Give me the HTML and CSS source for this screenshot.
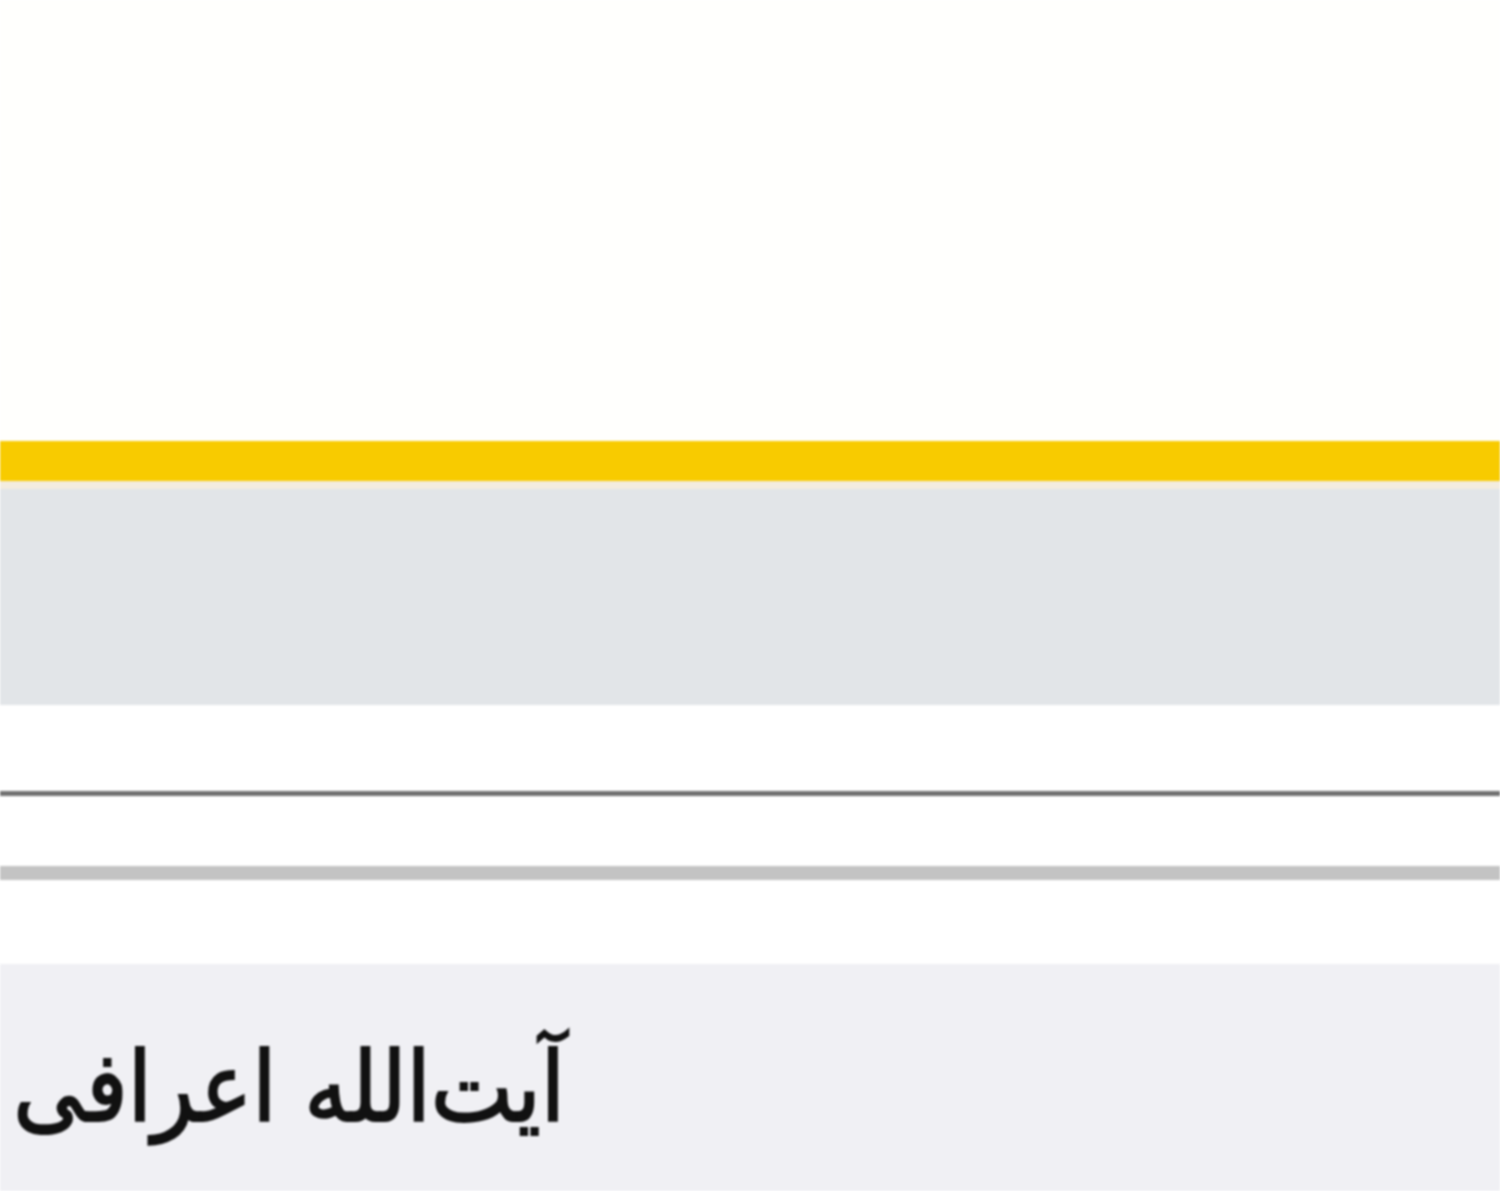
FILE: index.html
```html
<!DOCTYPE html>
<html lang="fa">
<head>
  <meta charset="UTF-8">
  <meta name="viewport" content="width=device-width, initial-scale=1.0">
  <title>آیت‌الله اعرافی</title>
  <link rel="stylesheet" href="styles.css">
</head>
<body>
  <div class="page">
    <div class="top-space"></div>
    <div class="accent-bar"></div>
    <div class="nav-band"></div>
    <div class="spacer"></div>
    <div class="rule-dark"></div>
    <div class="spacer small"></div>
    <div class="rule-light"></div>
    <div class="spacer wide"></div>

    <!-- عنوان خبر -->
    <div class="news-panel">
      <div class="news-title" dir="rtl">آیت‌الله اعرافی</div>
    </div>
  </div>
</body>
</html>
```

FILE: styles.css
```css
body {
  margin: 0;
  padding: 0;
  background: #fff;
  font-family: "DejaVu Sans", sans-serif;
  overflow: hidden;
}

.page {
  display: flex;
  flex-direction: column;
  height: 1191px;
  filter: blur(1px);
}

.top-space {
  height: 441px;
  background: #fffffd;
}

.accent-bar {
  height: 40px;
  background: #f8cb00;
  border-bottom: 8px solid #f3ecdf;
}

.nav-band {
  height: 216px;
  background: #e2e5e8;
}

.spacer {
  height: 86px;
}

.spacer.small {
  height: 70px;
}

.spacer.wide {
  height: 84px;
}

.rule-dark {
  height: 5px;
  background: #707070;
}

.rule-light {
  height: 14px;
  background: #c3c3c3;
}

.news-panel {
  flex: 1;
  display: flex;
  background: #f0f0f4;
  padding-top: 54px;
}

.news-title {
  width: 565px;
  font-family: "DejaVu Sans Condensed", "DejaVu Sans", sans-serif;
  font-stretch: condensed;
  font-size: 97px;
  line-height: 140px;
  color: #111;
  -webkit-text-stroke: 2px #111;
  text-align: right;
  white-space: nowrap;
}
```
